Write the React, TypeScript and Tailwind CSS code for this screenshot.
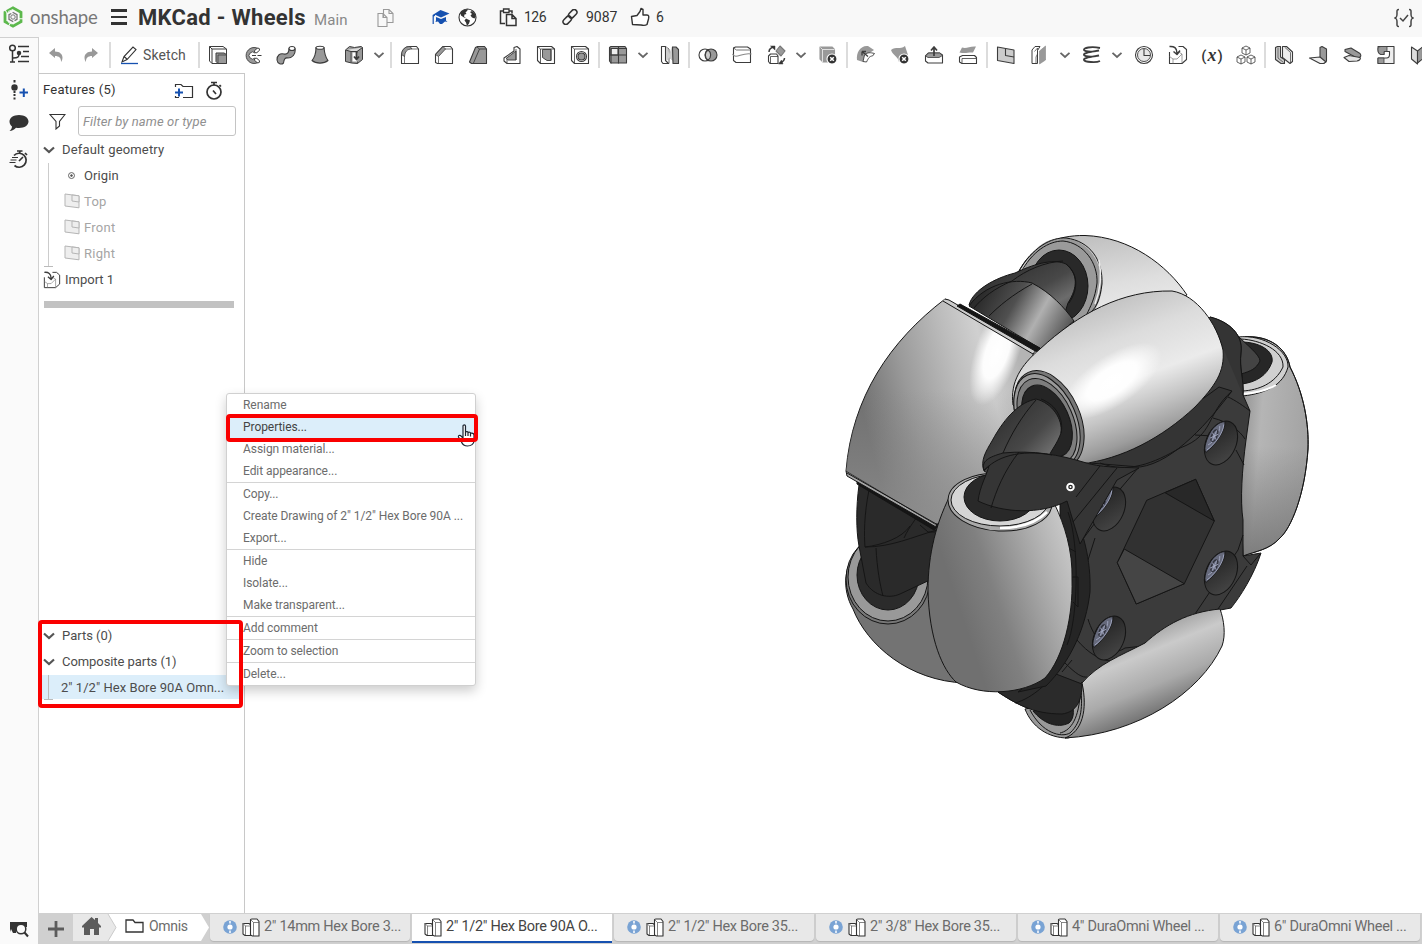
import React from "react";

type IconProps = { children: React.ReactNode; className?: string; size?: number };

function Ico({ children, className = "", size = 20 }: IconProps) {
  return (
    <svg
      width={size}
      height={size}
      viewBox="0 0 20 20"
      fill="none"
      stroke="#3c3c3c"
      strokeWidth="1.1"
      strokeLinejoin="round"
      className={`block shrink-0 ${className}`}
    >
      {children}
    </svg>
  );
}

const G = "#999";

const icons: Record<string, React.ReactNode> = {
  extrude: (<><path d="M1.500 1.500h13.500l3.500 2.500v14.500H4l-2.500-2.500z M4 18.500V4h14.500 M1.500 1.500l2.500 2.500" fill="#fff" strokeWidth="1" /><path d="M8 8h8l2.500 1.500v9h-8.500l-2-2z" fill={G} strokeWidth="1" /><path d="M10 18v-8h8.500" strokeWidth=".8" /></>),
  revolve: (<><path d="M16 3.500A8 8 0 1 0 16 17.500l-3-4.500a3.500 3.500 0 1 1 0-5z" fill={G} strokeWidth=".9" /><path d="M10 10.500h10" strokeDasharray="4 1.500" /><ellipse cx="15" cy="5.500" rx="1.700" ry="3" transform="rotate(50 15 5.500)" fill="#fff" strokeWidth=".9" /><ellipse cx="15" cy="15.500" rx="1.700" ry="3" transform="rotate(-50 15 15.500)" fill="#fff" strokeWidth=".9" /></>),
  sweep: (<><path d="M1 15c0-5 3-7 7-6 3 .7 5-1 5-5.500l6 0c1 6-3 9.500-7 9.500-3-.6-4 1-4.500 5-2 2-6 1-6.500-3z" fill={G} /><ellipse cx="16" cy="3.500" rx="3" ry="2" fill="#fff" /></>),
  loft: (<><path d="M6 2.500h8c.5 6 1.500 10 4 13-4 3.500-12 3.500-16 0C5 12 6 8 6 2.500z" fill={G} /><ellipse cx="10" cy="2.800" rx="4" ry="1.500" fill="#fff" /></>),
  thicken: (<><path d="M1.500 5l4-3.500 5 1 6.500-1 1.500 1v12l-5 4-6-.5-6-1.500z" fill={G} strokeWidth="1" /><path d="M1.500 5l5.500 1.500h6l5.500-4" fill="#ddd" strokeWidth="1" /><path d="M7 6.500v11.500M13.500 6.500v12" strokeWidth=".8" /><path d="M8.500 7.500h5v9h-5z" fill="#fff" stroke="none" /><path d="M12.500 6v8M10 11.500l2.500 3 2.500-3" strokeWidth="1.800" /></>),
  fillet: (<><path d="M1.500 18.500V9.500C2 5 5 1.500 10 1.500h6.500l2 2.500v14.500h-15z" fill="#fff" /><path d="M1.500 9.500C2 4.500 5 1.500 10 1.500l2 2.500c-5 0-7 2.500-7.500 7.500z" fill={G} strokeWidth=".8" /><path d="M12 4h6.500M4.500 11v7.500" strokeWidth=".7" /></>),
  chamfer: (<><path d="M1.500 17.500V9.500L9 1.500h7.500l2 2.500v14.500h-15z" fill="#fff" /><path d="M1.500 9.500L9 1.500l2.500 2.500L4.500 11.500z" fill={G} strokeWidth=".8" /><path d="M11 4h7.500M4.500 11.500v7" strokeWidth=".7" /></>),
  draft: (<><path d="M1.500 17L7.500 2.500l2-1h7l2 2.500v14.500H3.500z" fill={G} /><path d="M11.500 4h7M11.500 4L5.500 18M11.500 4L9 2" strokeWidth=".9" /></>),
  rib: (<><path d="M2 13l10-7V2.500l3-1 3 2.500v14.500H5l-3-2.500z" fill="#fff" /><path d="M4 13.500L14 6v9H6z" fill={G} strokeWidth=".9" /><path d="M14 4v11M5 18v-3.500" strokeWidth=".8" /></>),
  shell: (<><path d="M1.500 1.500h14l3 2.500v14.500h-14l-3-3z" fill="#fff" /><path d="M6.500 4.500h8.500v11l-4 0-4.500-3z" fill={G} strokeWidth=".9" /><path d="M1.500 1.500l3 2.500h14M4.500 4v14.500M15 4.500v11" strokeWidth=".8" /></>),
  hole: (<><path d="M1.500 1.500h14l3 2.500v14.500h-14l-3-3z" fill="#fff" /><path d="M1.500 1.500l3 2.500h14M4.500 4v14.500" strokeWidth=".8" /><circle cx="11.500" cy="11.500" r="5" fill="#fff" /><circle cx="11.500" cy="11.500" r="3.500" fill={G} /></>),
  pattern: (<><path d="M1.500 2.500l1.500-1h14l1.500 2v14.500H3l-1.500-2z" fill={G} /><path d="M3 3.500h7v6.500H3z" fill="#eee" /><path d="M10.500 2v16.500M2 10h16.500M3 3.500h15.500M3 3.500v15" /></>),
  mirror: (<><path d="M1.500 1.500h4v14l3 3H3l-1.500-2z" fill="#fff" /><path d="M6 2l3 2v14.500" strokeWidth=".8" /><path d="M6.500 1.500l3 7 3-7v14l-3-3-3 3z" fill="#ccc" stroke="#bbb" strokeWidth=".5" /><path d="M12.500 2h3.500l2.500 2.500v14h-5.500z" fill={G} /></>),
  boolean: (<><circle cx="7" cy="10" r="6" fill="#fff" /><circle cx="13" cy="10" r="6" fill={G} /><path d="M10 5a6 6 0 0 1 0 10a6 6 0 0 1 0-10z" fill="#ccc" /></>),
  split: (<><path d="M1.500 3l2-1h12l3 2v13.500H4l-2.500-2z" fill="#fff" /><path d="M1.500 3l3 2h14" strokeWidth=".7" /><path d="M.5 9c3.500 6 9-2 19 0" stroke="#888" /></>),
  transform: (<><path d="M2.500 11l2-2h6l1.500 2v7.500h-8l-1.500-2z" fill="#fff" /><path d="M4.500 11.500h7.500M4.500 11.500v7" strokeWidth=".8" /><path d="M10 6l4-5 5 5-4 5z" fill={G} stroke="#777" /><path d="M3 7c0-3 2-4.500 5-5M18.500 13c0 2.500-2 4-4.500 5" strokeWidth="1.500" /><path d="M4.500 1H9v4zM17 19h-4.500l3-4z" fill="#333" strokeWidth=".5" /></>),
  deletePart: (<><path d="M2 2h12l2.500 2.500V17H5l-3-3z" fill={G} stroke={G} /><path d="M2.500 2.500l2 2h12M4.500 4.500V17" stroke="#fff" strokeWidth=".7" /><circle cx="14" cy="14" r="5" fill="#333" stroke="#fff" /><path d="M12.200 12.200l3.600 3.600M15.800 12.200l-3.600 3.600" stroke="#fff" strokeWidth="1.500" /></>),
  modifyFillet: (<><path d="M1 15C0 7 5 0 12 1l6 4-6 4-5 8z" fill={G} stroke="none" /><path d="M8.500 10c3-3 6-2.500 10-1.500l-2 2.500c-3 0-4 2-6 6l-3.500-.5z" fill="#fff" strokeWidth=".9" /><path d="M6 6.500h4M6 6.500v4M6 6.500l6 5" strokeWidth="1.300" /></>),
  deleteFace: (<><path d="M1 5c5-4 9 0 14-4l3 9c-4 1-5 4-9 7-1-6-6-6-8-12z" fill={G} stroke="none" /><circle cx="14" cy="14" r="5" fill="#333" stroke="#fff" /><path d="M12.200 12.200l3.600 3.600M15.800 12.200l-3.600 3.600" stroke="#fff" strokeWidth="1.500" /></>),
  moveFace: (<><path d="M1.500 11l3-3h11l3 2v8H4l-2.500-2z" fill="#fff" /><path d="M1.500 11l3-3h11l3 2.500-3.500 2H4z" fill={G} strokeWidth=".8" /><path d="M10 11V3M7 5.500L10 2l3 3.500" strokeWidth="1.700" /></>),
  replaceFace: (<><path d="M4 2.500c5 1.500 7-1.500 14-1l-3 6C10 7 8 9 1.500 7.500z" fill={G} stroke="none" /><path d="M1.500 12l3-1.500h12l2 2v6H4l-2.500-1.500z" fill="#fff" /><path d="M4 13.500h14.500M4 13.500v5" strokeWidth=".8" /></>),
  plane: (<><path d="M1.500 2L18 5v13.500l-16.500-3z" fill="#ccc" /><path d="M9.500 3.500v7L18 12" /></>),
  frame: (<><path d="M2 5l3-3.500h5l-2.500 4V18.500H2z" fill="#fff" strokeWidth="1" /><path d="M4.500 6.500L7.500 3v6L6 12v6" strokeWidth=".7" /><path d="M9.500 6l6-5v14l-6 4z" fill={G} stroke="#888" strokeWidth=".6" /></>),
  helix: (<><path d="M18 3C9 1 1 3 2 5s12 2 15 .5M17 5.500C9 7 1 8 2 10s12 2 15 .5M17 10.500C9 12 1 13 2 15s12 3 16 1" strokeWidth="1.800" /></>),
  curve: (<><circle cx="10" cy="10" r="8.500" fill="#fff" /><circle cx="10" cy="10" r="6.500" fill="#e8e8e8" strokeWidth=".9" /><path d="M10 4v6.500h6" /></>),
  derived: (<><path d="M1.500 7v11.500h12.500l4.500-4V4.500L15 1.500h-4.500" fill="#fff" /><path d="M1.500 11.500L5 14v4.500M5 14h4l5-5M14 9v9M14 9l-3.500-2" strokeWidth=".7" stroke="#777" /><path d="M1.500 1.500C6 1 9 3 9 8M5.500 6.500L9 9.500l3-4" strokeWidth="1.500" /></>),
  composite: (<>{[[10, 1], [5, 10], [15, 10]].map(([x, y], i) => (<g key={i} transform={`translate(${x} ${y})`} strokeWidth=".8"><path d="M0 0l4 2v5L0 9l-4-2V2z" fill="#fff" /><path d="M-4 2l4 2 4-2M0 4v5" /></g>))}</>),
  flange: (<><path d="M1.500 2.500l2-1h3v10.500l4 2.500v4H7l-5.500-4z" fill="#ccc" /><path d="M4 2.500v10.500l5.500 4.500" strokeWidth=".7" /><path d="M8.500 1.500h4l6 5.500v9.500l-2.500 2-7.500-6z" fill="#eee" /><path d="M10.500 2l6 5.500v10.500" strokeWidth=".7" /></>),
  flange2: (<><path d="M12 12V2.500l2-1 4.500 2.500v12l-3 2.500z" fill={G} /><path d="M1.500 13l10.500-1 6 5-2.500 1.500H12z" fill="#eee" /></>),
  hem: (<><path d="M3 4.500l6-1.500 9 5.500c2 3 0 4.500-4 4L3 6.500z" fill={G} /><path d="M2 12.500l5-2 11 2c1 1 0 3-3 3.500L7 16.500z" fill="#e5e5e5" /></>),
  tab: (<><path d="M2 1.500h16V18.500H2V13h8.500c2 0 3-1.500 3-3.500V6.500H8v3H5C3 9 2 7 2 4.500z" fill="#eee" /><path d="M2 4.500C2 2.500 3 1.500 5 1.500h6v5H8v3H5C3 9 2 7 2 4.500z" fill={G} strokeWidth=".8" /><path d="M2 13h6v5.500H2z" fill={G} strokeWidth=".8" /></>),
  bend: (<><path d="M1.500 2l6 4v13l-6-5z" fill="#ddd" /><path d="M7.500 6l5-4v12l-5 4z" fill={G} /></>),
};

function Chevron() {
  return (
    <div className="flex w-[18px] shrink-0 justify-center pr-[2px]">
      <svg width="12" height="8" viewBox="0 0 12 8" fill="none" stroke="#666" strokeWidth="1.800"><path d="M1.500 1.800L6 6l4.500-4.200" /></svg>
    </div>
  );
}

function Sep() {
  return (
    <div className="flex w-1 shrink-0 justify-center"><div className="h-[26px] w-[2px] bg-[#dcdcdc]" /></div>
  );
}

const toolbar = [
  "extrude", "revolve", "sweep", "loft", "thicken", "v", "|",
  "fillet", "chamfer", "draft", "rib", "shell", "hole", "|",
  "pattern", "v", "mirror", "|",
  "boolean", "split", "transform", "v", "deletePart", "|",
  "modifyFillet", "deleteFace", "moveFace", "replaceFace", "|",
  "plane", "frame", "v", "helix", "v", "curve", "derived", "variable", "composite", "|",
  "flange", "flange2", "hem", "tab", "bend",
];

function Toolbar() {
  return (
    <div className="flex h-9 shrink-0 items-center overflow-hidden bg-white">
      <div className="flex w-[69px] shrink-0 items-center gap-[21px] pl-[10px]">
        <svg width="14" height="16" viewBox="0 0 14 16" fill="#999" className="shrink-0"><path d="M0 6l6-5v3.500c5 0 7.500 3 7.500 6 0 2-.8 3.500-1.500 4.500.3-4-2-6-6-6V11z" /></svg>
        <svg width="14" height="16" viewBox="0 0 14 16" fill="#999" className="shrink-0"><path d="M14 6L8 1v3.500c-5 0-7.500 3-7.500 6 0 2 .8 3.500 1.500 4.500-.3-4 2-6 6-6V11z" /></svg>
      </div>
      <Sep />
      <div className="flex w-[85px] shrink-0 items-center pl-[8px]">
        <svg width="19" height="20" viewBox="0 0 19 20" fill="none" stroke="#333" strokeWidth="1.100" className="shrink-0"><path d="M2 17l2-5.500L13 2l3 2.500-9 10z M4 11.500l3.500 3" /><path d="M1 18.500h17" stroke="#1651b0" strokeWidth="1.300" /></svg>
        <span className="ml-[4px] text-[14px] leading-5 tracking-[0.1px] text-[#555]">Sketch</span>
      </div>
      <Sep />
      {toolbar.map((t, i) =>
        t === "v" ? <Chevron key={i} /> : t === "|" ? <Sep key={i} /> : (
          <div key={i} className="flex w-[34px] shrink-0 justify-center">
            {t === "variable" ? (
              <span className="flex items-baseline text-[15px] font-medium leading-5 text-[#333]">(<i className="px-px font-['Liberation_Serif',serif] text-[18px] font-bold">x</i>)</span>
            ) : <Ico>{icons[t]}</Ico>}
          </div>
        )
      )}
    </div>
  );
}

function Header() {
  return (
    <header className="flex h-[37px] shrink-0 items-center bg-[#f8f8f8] pb-[3px] text-[#333]">
      <svg width="20" height="22" viewBox="0 0 20 22" fill="none" className="ml-[3px] shrink-0">
        <path d="M10 1.800L18 6.400V15.600L10 20.200L2 15.600V6.400Z" stroke="#5cb84c" strokeWidth="2.800" strokeDasharray="15 1" />
        <path d="M10 6.500l4 2.200v4.600l-4 2.200-4-2.200V8.700z" stroke="#777" strokeWidth="1.300" strokeDasharray="12 1.500" />
        <circle cx="10" cy="11" r="2.200" stroke="#777" />
        <path d="M5 5.500L10 3.500M15.500 8v5M5 16l4 2" stroke="#fff" strokeWidth=".8" />
      </svg>
      <span className="ml-[7px] w-[68px] font-['Lato',sans-serif] text-[18.500px] leading-6 tracking-[-0.100px] text-[#777]">onshape</span>
      <div className="ml-[13px] flex w-4 flex-col gap-1">
        <div className="h-[2.500px] bg-[#333]" /><div className="h-[2.500px] bg-[#333]" /><div className="h-[2.500px] bg-[#333]" />
      </div>
      <h1 className="ml-[11px] w-[176px] whitespace-nowrap pt-px text-[22px] font-bold leading-7 tracking-[0.300px]">MKCad - Wheels</h1>
      <span className="w-[63px] pt-[5px] text-[15px] leading-6 tracking-[0.100px] text-[#888]">Main</span>
      <svg width="17" height="20" viewBox="0 0 17 20" fill="#f8f8f8" stroke="#999" strokeWidth="1.100" className="mt-px"><path d="M6.500 1.500h5.500l4 4v9H6.500z M12 1.500v4h4" /><path d="M1 5.500h5l4 4v9H1z M6 5.500v4h4" /></svg>
      <svg width="18" height="17" viewBox="0 0 18 17" fill="#1651b0" className="ml-[38px]"><path d="M8.500 1L17.500 4.500 9 8.500 3 5.800v1L1.800 7.500V15H.6V6z" /><path d="M4 8l5 2 5-2v3.500l1.500 1.500-2.500-.5-3 2.500h-2L6 12.500l-2.500.5L4 11.500z" /></svg>
      <svg width="19" height="19" viewBox="0 0 19 19" className="ml-[8px]"><circle cx="9.500" cy="9.500" r="8.500" fill="#fff" stroke="#333" strokeWidth="1.100" /><path d="M2.500 5C5 1.500 8 1 10 1.500L9 3 7.500 4.500l1 1.500-2 .5-.5 2 2 1.500L6 9.500 3 7.500zM8 10.500l4 2-1 3-2 2.500-1-3.500-1.500-2z M12 4l2-1c2 1.500 3.500 3.500 3.800 5.500l-1.300 2L14 9.500l-1.500-2L14 6z" fill="#333" /></svg>
      <svg width="19" height="19" viewBox="0 0 19 19" fill="none" stroke="#333" strokeWidth="1.500" className="ml-[22px]"><path d="M6 15.500H1.500V3H13v2.500" /><path d="M4.500 1h5.500v3.500H4.500z" fill="#fff" strokeWidth="1.300" /><path d="M7.500 6.500h5.500l4 4v7H7.500z M13 6.500v4h4" fill="#f8f8f8" /></svg>
      <span className="ml-[6px] w-[39px] text-[14px] leading-5 tracking-[-0.500px]">126</span>
      <svg width="16" height="16" viewBox="0 0 16 16" fill="none" stroke="#333" strokeWidth="1.500" className="-ml-px shrink-0"><rect x="6" y="2" width="9.500" height="5.500" rx="2.750" transform="rotate(-45 10.750 4.750)" /><rect x=".5" y="8.500" width="9.500" height="5.500" rx="2.750" transform="rotate(-45 5.250 11.250)" /></svg>
      <span className="ml-[8px] w-[44px] text-[14px] leading-5">9087</span>
      <svg width="20" height="20" viewBox="0 0 20 20" fill="#fff" stroke="#333" strokeWidth="1.400" strokeLinejoin="round"><path d="M1.500 9.500L7 8.500l3-4L11 1.500l2 1V8h4c2 0 2 1.500 1.500 4L17 17.500c-2 1.500-4 1-6 .5L2.500 17.500z" /></svg>
      <span className="ml-[6px] text-[14px] leading-5">6</span>
      <svg width="22" height="20" viewBox="0 0 22 20" fill="none" stroke="#444" strokeWidth="1.500" className="ml-auto mr-[7px] mt-[2px]"><path d="M6 1.500C3.500 1.500 4 3 4 6S3.500 9.500 1.500 10C3.500 10.500 4 11 4 14s-.5 4.500 2 4.500M16 1.500c2.500 0 2 1.500 2 4.500s.5 3.500 2.500 4c-2 .5-2.500 1-2.500 4s.5 4.500-2 4.500M7 10l3 3 5-6" /></svg>
    </header>
  );
}

function Rail() {
  return (
    <aside className="flex w-[39px] shrink-0 flex-col items-center border-r border-t border-[#d0d0d0] bg-[#fafafa] pt-[5px]">
      <svg width="22" height="20" viewBox="0 0 22 20" fill="none" stroke="#333" strokeWidth="1.500" className="mt-px"><circle cx="4.500" cy="4" r="2.800" /><path d="M4.500 7v11M2 18h5M5 14c5 0 6-1 6-4M10 2.500h11M15 7.500h6M13 12.500h8M10 17.500h11" /><circle cx="11" cy="9" r="1.500" fill="#333" /></svg>
      <svg width="20" height="20" viewBox="0 0 20 20" fill="#333" className="mt-[16px]"><path d="M4.500 0h2v2.500h-2zM4.500 14h2v2h-2zM4.500 17.500h2v2h-2zM4.500 11h2v2h-2z" /><circle cx="5.500" cy="7.500" r="3.200" /><path d="M10.500 12.500h8.500M14.800 8.500v8.500" stroke="#1651b0" strokeWidth="2" /></svg>
      <svg width="20" height="18" viewBox="0 0 20 18" fill="#333" className="mt-[14px]"><path d="M10 1c5.500 0 9.500 2.800 9.500 6.500S15.500 14 10 14c-1 0-2 0-3-.3C5.500 15.500 3 17 .5 17c1.500-1 2.500-3 2.500-4.500C1.500 11.300.5 9.600.5 7.500.5 3.800 4.500 1 10 1z" /></svg>
      <svg width="20" height="20" viewBox="0 0 20 20" fill="none" stroke="#333" strokeWidth="1.700" className="mt-[17px]"><path d="M5 6.500a7 7 0 1 1 .5 10M8 2h5.500M10.800 2v3M16 4l2 2M10 12l4-4" /><path d="M3 8.500h6M1.500 11h6M.5 13.500h6" strokeWidth="1.200" /></svg>
      <svg width="20" height="18" viewBox="0 0 20 18" className="mb-[6px] mt-auto"><path d="M1 2h17v5H7v6H4L2 9l-1 3z" fill="#333" /><circle cx="12" cy="9" r="4.800" fill="#fafafa" stroke="#333" strokeWidth="1.500" /><path d="M15.500 12.500l3.500 4" stroke="#333" strokeWidth="2" /></svg>
    </aside>
  );
}

function Caret() {
  return (
    <svg width="12" height="8" viewBox="0 0 12 8" fill="none" stroke="#555" strokeWidth="2.200" className="-mt-px shrink-0"><path d="M1 1.500l5 4.500 5-4.500" /></svg>
  );
}

function FeaturePanel() {
  return (
    <section className="relative flex w-[206px] shrink-0 flex-col border-r border-t border-[#c8c8c8] text-[13px] leading-[26px] text-[#4c4c4c]">
      <div className="flex h-[32px] items-center pl-[4px]">
        <span className="w-[131px] tracking-[0.250px] text-[#333]">Features (5)</span>
        <svg width="20" height="16" viewBox="0 0 20 16" fill="none" stroke="#333" strokeWidth="1.200" className="mt-[2px]"><path d="M1.500 4V1.500h5.500l2 2h9.500v11H9M1.500 13v1.500H5" /><path d="M1 9.500h8M5 5.500v8" stroke="#1651b0" strokeWidth="2" /></svg>
        <svg width="18" height="20" viewBox="0 0 18 20" fill="none" stroke="#333" strokeWidth="1.700" className="ml-[11px] mt-[2px]"><circle cx="9" cy="11" r="7" /><path d="M6 1.500h6M9 2v2.500M14.500 4l1.500 1.500M8 9.500l3 3.500" /></svg>
      </div>
      <div className="mb-px flex h-[30px] items-center">
        <svg width="17" height="17" viewBox="0 0 17 17" fill="none" stroke="#333" strokeWidth="1.100" className="ml-[10px]"><path d="M1 1.500h15l-5.500 7V13L7 16V8.500z" /></svg>
        <div className="ml-[12px] h-[30px] w-[158px] rounded-[3px] border border-[#c4c4c4] pl-[4px] text-[13px] italic leading-[29px] tracking-[0.120px] text-[#909090]">Filter by name or type</div>
      </div>
      <div className="flex h-[26px] items-center gap-[7px] pl-[4px]"><Caret /><span className="tracking-[0.170px]">Default geometry</span></div>
      <div className="ml-[9px] flex h-[104px] w-[180px] flex-col border-l border-[#ccc]">
        <div className="flex h-[26px] items-center pl-[18px]">
          <svg width="9" height="10" viewBox="0 0 10 10" fill="none" stroke="#555"><circle cx="5" cy="4.500" r="3.300" /><circle cx="5" cy="4.500" r="1" fill="#555" /></svg>
          <span className="ml-[8px] tracking-[0.100px]">Origin</span>
        </div>
        {["Top", "Front", "Right"].map((t) => (
          <div key={t} className="flex h-[26px] items-center pl-[15px] text-[#a5a5a5]">
            <svg width="16" height="16" viewBox="0 0 16 16" fill="#eee" stroke="#b5b5b5" className="-mt-[3px]"><path d="M1 1l14 1.800v12L1 13z" /><path d="M8 2v6l7 1V2.800z" /></svg>
            <span className="ml-[4px] tracking-[0.250px]">{t}</span>
          </div>
        ))}
        <div className="-ml-[5px] -mt-px h-px w-[9px] shrink-0 bg-[#bbb]" />
      </div>
      <div className="flex h-[26px] items-center pl-[4px]">
        <Ico size={18}>{icons.derived}</Ico><span className="ml-[4px]">Import 1</span>
      </div>
      <div className="ml-[5px] mt-[8px] h-[7px] w-[190px] bg-[#c2c2c2]" />
      <div className="mt-[315px] flex h-[26px] items-center gap-[7px] pl-[4px]"><Caret /><span>Parts (0)</span></div>
      <div className="flex h-[26px] items-center gap-[7px] pl-[4px]"><Caret /><span className="tracking-[-0.070px]">Composite parts (1)</span></div>
      <div className="ml-[3px] h-[24px] w-[199px] bg-[#dceefa] pl-[6px]">
        <div className="h-[24px] whitespace-nowrap border-l border-[#bbb] pl-[12px] leading-[26px] tracking-[0.050px]">2" 1/2" Hex Bore 90A Omn...</div>
      </div>
      <div className="ml-[5px] h-px w-[9px] bg-[#bbb]" />
    </section>
  );
}

const groups = [
  ["Rename", "Properties...", "Assign material...", "Edit appearance..."],
  ["Copy...", "Create Drawing of 2\" 1/2\" Hex Bore 90A ...", "Export..."],
  ["Hide", "Isolate...", "Make transparent..."],
  ["Add comment"],
  ["Zoom to selection"],
  ["Delete..."],
];

function ContextMenu() {
  return (
    <div className="absolute left-[226px] top-[393px] w-[250px] rounded-[3px] border border-[#d0d0d0] bg-white text-[12px] leading-[22px] tracking-[-0.060px] text-[#6c6c6c] shadow-[0_5px_12px_rgba(0,0,0,0.2)]">
      {groups.map((g, i) => (
        <div key={i} className={i ? "border-t border-[#d4d4d4]" : ""}>
          {g.map((t) => (
            <div key={t} className={t === "Properties..." ? "h-[22px] bg-[#dceefa] pl-4 text-[#444]" : "h-[22px] whitespace-nowrap pl-4"}>{t}</div>
          ))}
        </div>
      ))}
    </div>
  );
}

function PartIcon() {
  return (
    <svg width="18" height="19" viewBox="0 0 18 19" fill="#fff" stroke="#333" strokeWidth="1.100" strokeLinejoin="round" className="shrink-0"><path d="M1 5.500h6L9 7v10.500H3L1 16z" /><path d="M1 5.500L3.500 8h5M3.500 8v9.500" strokeWidth=".6" /><path d="M8.500 1.500L10 1h5l2 2.500V18h-6.500l-2-1z" /><path d="M8.500 1.500l3 3H17M11.500 4.500V18" strokeWidth=".6" /></svg>
  );
}

function BottomBar() {
  const tabs = ["2\" 14mm Hex Bore 3...", "2\" 1/2\" Hex Bore 90A O...", "2\" 1/2\" Hex Bore 35...", "2\" 3/8\" Hex Bore 35...", "4\" DuraOmni Wheel ...", "6\" DuraOmni Wheel ..."];
  return (
    <div className="flex h-[31px] shrink-0 overflow-hidden border-t border-[#d0d0d0] bg-[#d0d0d0] text-[#6c6c6c]">
      <div className="flex w-[34px] shrink-0 items-center justify-center pb-px"><svg width="16" height="16" viewBox="0 0 16 16" stroke="#5c5c5c" strokeWidth="2.800"><path d="M0 8h16M8 0v16" /></svg></div>
      <svg width="137" height="28" viewBox="0 0 137 28" className="shrink-0"><path d="M0 0h35l8 13.500L35 27H0z" fill="#e8e8e8" /><path d="M35 0h93l8 13.500L128 27H35l8-13.500z" fill="#fff" /><path d="M35 0l8 13.500L35 27" fill="none" stroke="#ccc" /><path d="M9 12l9.500-9 3.500 3V4h3v5l3 3v1.500h-2V21h-5v-6h-4v6H11v-7.500H9z" fill="#5c5c5c" /><path d="M53 6h7l2 2.500h8V18H53z" fill="#fff" stroke="#333" strokeWidth="1.300" /><text x="76" y="17" fontSize="14" fill="#6c6c6c" fontFamily="Roboto, sans-serif" textLength="39">Omnis</text></svg>
      <div className="flex shrink-0 gap-[2px]">
        {tabs.map((t, i) => (
          <div key={t} className={i === 1 ? "flex h-[29px] w-[200px] items-center border-b-[2px] border-[#1651b0] bg-white pl-[12px] text-[#444]" : "flex h-[27px] w-[200px] items-center rounded-b-[4px] bg-[#e8e8e8] pl-[13px] shadow-[0_1px_1px_#b5b5b5]"}>
            {i !== 1 && <svg width="14" height="14" viewBox="0 0 14 14" className="mr-[5px] mt-[-2px] shrink-0"><circle cx="7" cy="7" r="6.800" fill="#79a3d4" /><circle cx="7" cy="7" r="2.600" fill="#fff" /><path d="M7 1v2.500M7 10.500V13" stroke="#fff" strokeWidth="1.500" /></svg>}
            <PartIcon />
            <span className="ml-[4px] mt-[-2px] whitespace-nowrap text-[14.500px] leading-6 tracking-[-0.310px]">{t}</span>
          </div>
        ))}
      </div>
    </div>
  );
}

function Screw({ x, y }: { x: number; y: number }) {
  return (
    <g transform={`translate(${x} ${y}) rotate(24)`}>
      <ellipse rx="15" ry="23" fill="url(#hole)" />
      <path d="M-14 -7C-12 -16 -8 -20 -5 -21C-1 -14 -4 4 -10 15C-14 12 -15 2 -14 -7Z" fill="#666a7c" strokeWidth=".8" />
      <g fill="none" stroke="#a3a8c2" strokeWidth=".8"><path d="M-5 -18C-2 -10 -5 4 -10 12M-8 -15C-5 -9 -7 2 -11 7" /><ellipse cx="-9" cy="-4" rx="2.500" ry="6" stroke="#30323c" strokeWidth="1.500" /><path d="M-12 -6l6 5M-6 -7l-6 7M-9 -10v12" /></g>
    </g>
  );
}

function Wheel() {
  return (
    <svg width="480" height="520" viewBox="840 225 480 520" stroke="#151515" strokeWidth="1" fill="none" strokeLinejoin="round" className="block">
      <defs>
        <linearGradient id="top" x1="0" y1="0" x2=".3" y2="1"><stop offset="0" stopColor="#b8b8b8" /><stop offset=".6" stopColor="#dedede" /><stop offset="1" stopColor="#eee" /></linearGradient>
        <linearGradient id="big" gradientUnits="userSpaceOnUse" x1="866" y1="425" x2="1025" y2="385"><stop offset="0" stopColor="#707070" /><stop offset=".3" stopColor="#9a9a9a" /><stop offset=".6" stopColor="#bcbcbc" /><stop offset=".8" stopColor="#d0d0d0" /><stop offset="1" stopColor="#b4b4b4" /></linearGradient>
        <linearGradient id="fade" gradientUnits="userSpaceOnUse" x1="0" y1="390" x2="0" y2="520"><stop offset="0" stopColor="#888" stopOpacity="0" /><stop offset="1" stopColor="#8c8c8c" stopOpacity=".85" /></linearGradient>
        <linearGradient id="front" gradientUnits="userSpaceOnUse" x1="1090" y1="295" x2="1150" y2="455"><stop offset="0" stopColor="#bbb" /><stop offset=".3" stopColor="#dcdcdc" /><stop offset=".55" stopColor="#ebebeb" /><stop offset=".72" stopColor="#c4c4c4" /><stop offset=".88" stopColor="#9c9c9c" /><stop offset="1" stopColor="#6e6e6e" /></linearGradient>
        <linearGradient id="low" gradientUnits="userSpaceOnUse" x1="960" y1="610" x2="1080" y2="570"><stop offset="0" stopColor="#707070" /><stop offset=".3" stopColor="#808080" /><stop offset=".8" stopColor="#b5b5b5" /><stop offset="1" stopColor="#c8c8c8" /></linearGradient>
        <linearGradient id="right" x1="0" y1="0" x2="1" y2=".25"><stop offset="0" stopColor="#858585" /><stop offset=".4" stopColor="#b5b5b5" /><stop offset="1" stopColor="#a4a4a4" /></linearGradient>
        <linearGradient id="shade" x1="0" y1="0" x2="0" y2="1"><stop offset=".5" stopColor="#777" stopOpacity="0" /><stop offset="1" stopColor="#777" stopOpacity=".9" /></linearGradient>
        <linearGradient id="bottom" gradientUnits="userSpaceOnUse" x1="1130" y1="630" x2="1165" y2="715"><stop offset="0" stopColor="#999" /><stop offset=".3" stopColor="#cacaca" /><stop offset=".65" stopColor="#aaa" /><stop offset="1" stopColor="#6b6b6b" /></linearGradient>
        <linearGradient id="shaft" x1="0" y1="0" x2="1" y2="1"><stop offset="0" stopColor="#252525" /><stop offset=".55" stopColor="#484848" /><stop offset=".75" stopColor="#6c6c6c" /><stop offset="1" stopColor="#333" /></linearGradient>
        <linearGradient id="dome" gradientUnits="userSpaceOnUse" x1="985" y1="290" x2="1065" y2="335"><stop offset="0" stopColor="#2c2c2c" /><stop offset=".35" stopColor="#505050" /><stop offset=".65" stopColor="#b0b0b0" /><stop offset="1" stopColor="#555" /></linearGradient>
        <linearGradient id="hole" x1="0" y1="0" x2="1" y2="1"><stop offset="0" stopColor="#1d1d1d" /><stop offset="1" stopColor="#4a4a4a" /></linearGradient>
        <radialGradient id="glow"><stop offset="0" stopColor="#fff" /><stop offset=".5" stopColor="#fff" stopOpacity=".95" /><stop offset="1" stopColor="#fff" stopOpacity="0" /></radialGradient>
        <clipPath id="bigClip"><path d="M945 299C890 341 852 397 846 471L935 524L1035 500L1033 351Z" /></clipPath>
      </defs>

      <path d="M1018 273C1031 246 1056 235 1085 235.500C1130 237 1167 265 1187 295L1080 335Z" fill="url(#top)" />
      <ellipse cx="1062" cy="284" rx="40" ry="46" fill="#9a9a9a" stroke="none" />
      <path d="M1018 273C1032 247 1052 237 1066 238C1090 241 1103 260 1102 284C1100 300 1096 307 1092 311M1020 274C1032 251 1049 241 1063 241C1084 243 1098 263 1097 283C1095 299 1090 307 1087 314" />
      <path d="M1099 260C1102 275 1100 291 1095 304" stroke="#eee" strokeWidth="1.500" />
      <ellipse cx="1059" cy="286" rx="29" ry="36" fill="#292929" />
      <path d="M969 305C973 290 995 278 1015 273C1038 262 1055 259 1066 264C1078 274 1078 287 1068 303L1062 322L1000 310Z" fill="url(#shaft)" />
      <path d="M1012 281C1026 270 1045 262 1063 261M1066 264C1079 274 1078 290 1069 303" />
      <path d="M969 306C985 284 1013 278 1032 283C1051 293 1064 307 1074 321L1041 349Z" fill="url(#dome)" />
      <path d="M1032 284C1012 295 999 306 989 316M1012 281C995 288 982 298 974 308" />

      <path d="M1245 337C1270 335 1287 349 1290 367C1304 394 1309 424 1308 449C1305 495 1291 528 1280 538C1269 550 1256 551 1243 556L1238 430Z" fill="url(#right)" />
      <path d="M1245 337C1270 335 1287 349 1290 367C1304 394 1309 424 1308 449C1305 495 1291 528 1280 538C1269 550 1256 551 1243 556L1238 430Z" fill="url(#shade)" />
      <path d="M1238 337C1264 334 1289 351 1288 367C1283 385 1267 393 1243 396Z" fill="#d0d0d0" />
      <path d="M1241 339C1260 340 1284 350 1283 367C1275 384 1258 390 1243 391" />
      <path d="M1276 385C1268 390 1255 393 1243 394" stroke="#fff" strokeWidth="2" />
      <path d="M1241 342C1260 342 1274 351 1272 362C1267 376 1256 382 1242 384Z" fill="#272727" />
      <path d="M1238 336C1247 345 1260 355 1260 361C1256 369 1251 371 1241 374Z" fill="#444" />

      <path d="M863 545C842 563 842 590 853 609C867 645 909 681 965 683L950 560Z" fill="#737373" />
      <ellipse cx="888" cy="579" rx="42" ry="45" fill="#777" />
      <ellipse cx="888" cy="577" rx="40" ry="44" fill="#999" />
      <ellipse cx="888" cy="575" rx="31" ry="35" fill="#2b2b2b" />
      <path d="M859 485C856 507 856 530 859 546L866 583C874 596 889 599 900 594L932 579L940 526L880 488Z" fill="#2a2a2a" />
      <path d="M869 490C864 515 864 535 865 547C892 547 912 537 937 530M876 548C877 568 880 585 883 596M904 538C910 525 916 520 918 514M865 547C882 545 902 538 910 526M920 525l8 7h10" />
      <path d="M857 479L938 526L934 530L857 484Z" fill="#151515" />

      <path d="M846 471L847 476L936 527L940 500Z" fill="#a5a5a5" />
      <path d="M945 299C890 341 852 397 846 471L935 524L1035 500L1033 351Z" fill="url(#big)" />
      <g clipPath="url(#bigClip)" stroke="none">
        <path d="M840 380h200v150H840z" fill="url(#fade)" />
        <ellipse cx="997" cy="352" rx="22" ry="56" transform="rotate(19 997 352)" fill="url(#glow)" />
      </g>
      <path d="M945 299L949 300L1036 350L1033 354L943 301" fill="#ccc" />
      <path d="M847 473L938 525" />
      <path d="M960 304L1040 348L1037 352L957 306Z" fill="#151515" />

      <path d="M1210 317C1230 322 1243 335 1241 352C1239 370 1244 378 1243 395L1250 411L1246 440C1242 470 1240 500 1243 520V556L1261 553C1254 575 1240 597 1231 608L1215 611L1083 690C1084 703 1078 715 1060 714C1037 715 1014 703 998 692L1060 660L1065 480L1125 440Z" fill="#3b3b3b" />
      <path d="M1210 317C1230 322 1243 335 1241 352C1239 370 1244 378 1243 395M1219 387L1232 391C1210 420 1175 462 1140 467L1090 463L1160 430Z" fill="#343434" />
      <path d="M1228 397C1235 400 1245 407 1250 411M1232 391C1205 415 1215 435 1180 448C1154 463 1128 474 1100 463M1195 435L1213 436M1213 418C1229 422 1240 431 1245 439M1236 450L1244 465M1243 535L1238 550L1193 617M1247 566L1218 609M1243 556L1251 565L1260 554M1138 468L1121 488L1080 543M1117 468L1073 507M1088 619C1093 636 1108 660 1125 648L1143 646M1077 640C1088 653 1101 661 1112 661M1064 662C1076 674 1082 678 1088 677M1095 538L1088 560" />
      <path d="M1195.700 479.300L1214.300 521L1184.300 583.700L1136.300 604L1117.300 562.700L1146.700 500.300Z" fill="#313131" />
      <path d="M1165 492.700L1195.700 479.300L1214.300 521Z" fill="#282828" />
      <path d="M1124.300 549L1184.300 583.700L1136.300 604L1117.300 562.700Z" fill="#454545" />
      <Screw x={1221} y={443} /><Screw x={1109} y={509} /><Screw x={1221} y={573} /><Screw x={1109} y={638} />

      <path d="M1025 709C1032 727 1048 738 1068 738C1084 735 1090 708 1082 682L1070 700Z" fill="#999" />
      <path d="M1033 711C1043 723 1057 729 1069 723C1075 718 1074 708 1071 700Z" fill="#242424" />
      <path d="M1082 683C1098 664 1120 656 1145 643C1165 625 1188 612 1220 609C1224 620 1226 635 1222 646C1200 693 1138 734 1065 738C1082 732 1088 710 1082 683Z" fill="url(#bottom)" />
      <path d="M1030 710C1042 733 1061 738 1070 733C1083 721 1082 704 1081 690M1080 696C1078 722 1069 731 1060 733" />
      <path d="M998 692C1015 703 1032 714 1062 714C1077 712 1082 700 1082 684L1056 674Z" fill="#2b2b2b" />
      <path d="M1015 703C1033 698 1050 682 1064 662" />

      <path d="M1013 405C1010 382 1021 365 1040 349C1078 314 1122 290 1172 291C1197 295 1217 324 1223 350C1225 372 1215 386 1195 407C1162 438 1122 459 1081 464Z" fill="url(#front)" />
      <ellipse cx="1112" cy="381" rx="58" ry="25" transform="rotate(-34 1112 381)" fill="url(#glow)" stroke="none" />
      <ellipse cx="1049" cy="419" rx="31" ry="51" transform="rotate(-24 1049 419)" fill="#777" />
      <ellipse cx="1047" cy="420" rx="29" ry="49" transform="rotate(-24 1047 420)" fill="#999" />
      <ellipse cx="1047" cy="421" rx="26" ry="45" transform="rotate(-24 1047 421)" fill="#7d7d7d" />
      <ellipse cx="1047" cy="421" rx="22" ry="38" transform="rotate(-24 1047 421)" fill="#252525" />
      <path d="M984 471C980 461 986 451 992 441C1006 415 1021 402 1036 399C1052 403 1063 419 1061 433C1057 444 1052 449 1049 456L1000 480Z" fill="url(#shaft)" />
      <path d="M1036 400C1022 416 1011 434 1003 453M1041 399C1057 405 1064 420 1061 433" />

      <path d="M1060 502L1067 498C1084 530 1091 560 1090 592C1086 627 1071 661 1046 686L1018 692C1042 675 1062 640 1060 570Z" fill="#252525" />
      <path d="M1068 512C1080 545 1078 620 1067 645M1067 547l9 5M1072 577h6v30l-5-5M1062 672l10-12" />
      <path d="M953 490C936 521 928 555 928 590C929 640 943 670 956 682C982 697 1023 694 1045 678C1064 657 1073 615 1072 580C1073 550 1064 524 1055 505Z" fill="url(#low)" />
      <ellipse cx="1000" cy="502" rx="52" ry="29" fill="#aaa" transform="rotate(3 1000 502)" />
      <ellipse cx="1000" cy="500" rx="49" ry="26" fill="#d5d5d5" />
      <path d="M1047 512C1035 524 1017 528 1000 528" stroke="#fff" strokeWidth="2.500" />
      <ellipse cx="1000" cy="497" rx="36" ry="24" fill="#292929" />
      <path d="M984 470C981 461 989 457 1003 453C1033 450 1060 455 1083 462C1101 468 1120 467 1139 468L1117 480L1080 544L1067 501C1040 515 1003 513 978 501C980 486 986 477 989 466Z" fill="#353535" />
      <path d="M1019 452C1004 471 996 491 991 508M984 471C995 457 1020 449 1052 455M1100 466L1076 497M1117 468L1073 522" />
      <circle cx="1070.500" cy="487" r="3.300" fill="#222" stroke="#fff" strokeWidth="2" /><circle cx="1070.500" cy="487" r="1" fill="#fff" stroke="none" />
    </svg>
  );
}

export default function App() {
  return (
    <div className="relative flex h-[944px] w-[1422px] flex-col overflow-hidden bg-white font-['Roboto',sans-serif]">
      <Header />
      <div className="flex min-h-0 flex-1">
        <Rail />
        <div className="flex min-w-0 flex-1 flex-col">
          <Toolbar />
          <div className="flex min-h-0 flex-1">
            <FeaturePanel />
            <main className="flex-1 overflow-hidden pl-[595px] pt-[152px]"><Wheel /></main>
          </div>
          <BottomBar />
        </div>
      </div>
      <ContextMenu />
      <svg width="18" height="24" viewBox="0 0 18 24" className="absolute left-[457px] top-[424px]" fill="#fff" stroke="#1c2430" strokeWidth="1.200"><path d="M6 14V2c0-1.500 2.500-1.500 2.500 0v6c1-.8 2.500-.5 2.500.5 1-.7 2.500-.2 2.500.8 1.500-.5 3.500 0 3.500 1.700V17c0 3-3 5-6.500 5s-5-1.500-6-4L1.500 13c-.5-1.500 1-2 2-1.500z M8.500 8v4M11 8.500v3.500M13.500 9.500v3" /></svg>
      <div className="absolute left-[226px] top-[414px] h-[28px] w-[252px] rounded-[4px] border-4 border-[#fa0000]" />
      <div className="absolute left-[38px] top-[620px] h-[88px] w-[205px] rounded-[4px] border-4 border-[#fa0000]" />
    </div>
  );
}
